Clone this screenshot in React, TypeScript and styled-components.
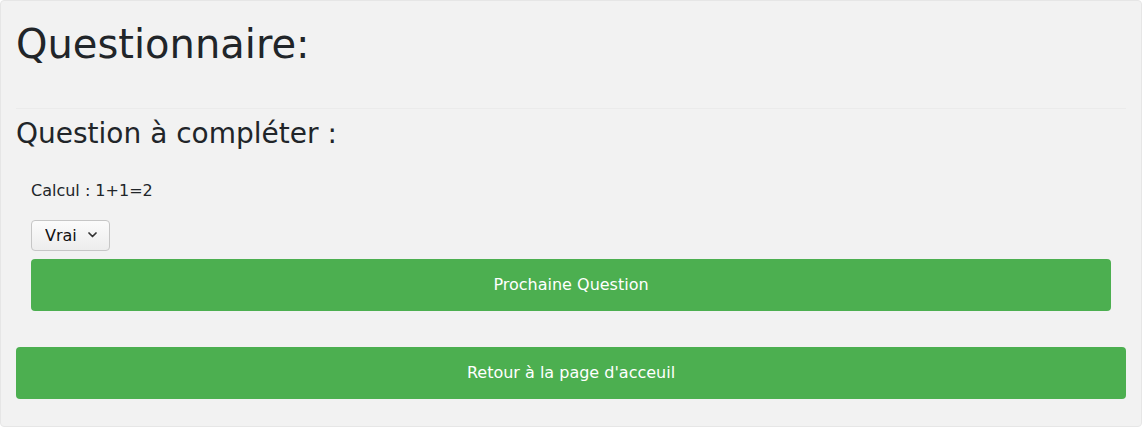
import React, { useState } from "react";
import styled, { createGlobalStyle } from "styled-components";

const GlobalStyle = createGlobalStyle`
  html, body {
    margin: 0;
    padding: 0;
    background: #ffffff;
  }
  body {
    font-family: "DejaVu Sans", "Noto Sans", sans-serif;
    color: #212529;
    font-size: 16px;
    line-height: 1.5;
  }
  * { box-sizing: border-box; }
`;

const Card = styled.main`
  width: 1142px;
  background: #f2f2f2;
  border: 1px solid #e6e6e6;
  border-radius: 4px;
  padding: 19px 15px 27px;
  display: flex;
  flex-direction: column;
`;

const Title = styled.h1`
  margin: 0 0 8px;
  font-size: 40px;
  font-weight: 400;
  line-height: 1.2;
  color: #212529;
`;

const Divider = styled.hr`
  margin: 32px 0 8px;
  border: 0;
  border-top: 1px solid #ebebeb;
  height: 0;
`;

const SubTitle = styled.h3`
  margin: 0 0 8px;
  font-size: 28px;
  font-weight: 400;
  line-height: 1.2;
  color: #212529;
`;

const QuestionBlock = styled.section`
  display: flex;
  flex-direction: column;
  align-items: flex-start;
  padding: 20px 15px 0;
`;

const Prompt = styled.p`
  margin: 0 0 17px;
  font-size: 16px;
  line-height: 24px;
  color: #212529;
`;

const SelectWrap = styled.div`
  position: relative;
  display: inline-flex;
  margin-bottom: 8px;
`;

const Select = styled.select`
  appearance: none;
  -webkit-appearance: none;
  width: 79px;
  height: 31px;
  padding: 0 24px 0 13px;
  font-family: "DejaVu Sans", sans-serif;
  font-size: 16px;
  color: #111;
  background: linear-gradient(#fbfbfb, #ededed);
  border: 1px solid #c6c6c6;
  border-radius: 4px;
  outline: none;
`;

const Chevron = styled.svg`
  position: absolute;
  right: 13px;
  top: 12px;
  width: 9px;
  height: 6px;
  pointer-events: none;
`;

const GreenButton = styled.button`
  width: 100%;
  height: 52px;
  padding: 14px 12px;
  border: 0;
  border-radius: 4px;
  background: #4caf50;
  color: #ffffff;
  font-family: "DejaVu Sans", sans-serif;
  font-size: 16px;
  line-height: 24px;
  text-align: center;
  cursor: pointer;
`;

const BackRow = styled.div`
  margin-top: 36px;
  display: flex;
`;

export default function App() {
  const [answer, setAnswer] = useState("vrai");
  return (
    <>
      <GlobalStyle />
      <Card>
        <Title>Questionnaire:</Title>
        <Divider />
        <SubTitle>Question à compléter :</SubTitle>
        <QuestionBlock>
          <Prompt>Calcul : 1+1=2</Prompt>
          <SelectWrap>
            <Select value={answer} onChange={(e) => setAnswer(e.target.value)}>
              <option value="vrai">Vrai</option>
              <option value="faux">Faux</option>
            </Select>
            <Chevron viewBox="0 0 9 6" fill="none">
              <path d="M1 1l3.5 3.5L8 1" stroke="#333" strokeWidth="1.7" strokeLinecap="round" strokeLinejoin="round" />
            </Chevron>
          </SelectWrap>
          <GreenButton type="button">Prochaine Question</GreenButton>
        </QuestionBlock>
        <BackRow>
          <GreenButton type="button">Retour à la page d'acceuil</GreenButton>
        </BackRow>
      </Card>
    </>
  );
}
